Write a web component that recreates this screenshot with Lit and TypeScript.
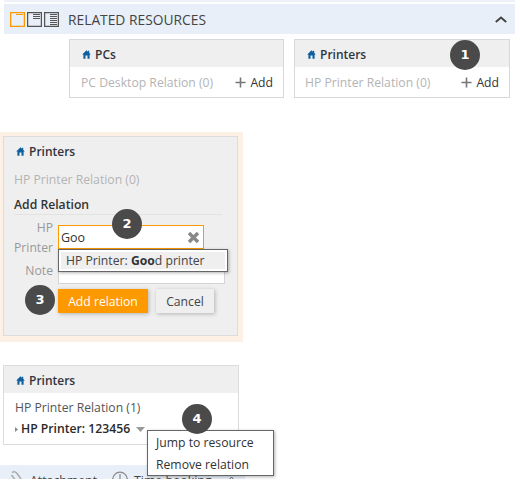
import { LitElement, html, css } from "lit";
import { customElement } from "lit/decorators.js";

const home = html`<svg class="home" width="9" height="9" viewBox="0 0 9 9"><path d="M4.500 .3 L6 1.700 V.8 H7.200 V2.800 L8.800 4.600 L7.600 4.600 L7.600 8.700 L5.500 8.700 L5.500 5.600 L3.500 5.600 L3.500 8.700 L1.400 8.700 L1.400 4.600 L.2 4.600Z" fill="#0f5f9f"/></svg>`;
const plus = html`<svg width="11" height="11" viewBox="0 0 11 11"><path d="M5.500 .5V10.500M.5 5.500H10.500" stroke="#777" stroke-width="1.600"/></svg>`;

@customElement("app-root")
export class AppRoot extends LitElement {
  static styles = css`
    :host { display: block; width: 520px; height: 489px; overflow: hidden; position: relative; background: #fff; font-family: "Open Sans", "Noto Sans", sans-serif; font-size: 12.2px; color: #333; }
    .topline { height: 2px; width: 511px; background: #eef2f8; margin: 0 0 2px 4px; }
    .bar { box-sizing: border-box; height: 30px; width: 511px; margin-left: 4px; background: #e8eff8; display: flex; align-items: center; padding: 0 8px 0 6px; }
    .views { display: flex; gap: 2px; margin-right: 9px; }
    .title { font-size: 13.800px; color: #444; flex: 1; }
    .cards { display: flex; gap: 10px; margin: 5px 0 0 69px; }
    .card { box-sizing: border-box; width: 215px; height: 59px; border: 1px solid #d8d8d8; background: #fff; }
    .card.p { width: 216px; }
    .head { box-sizing: border-box; height: 27px; background: #efefef; display: flex; align-items: center; padding: 2px 0 0 12px; gap: 4px; font-weight: 600; font-size: 12px; color: #2f3540; }
    .body { height: 30px; display: flex; align-items: center; justify-content: space-between; padding: 0 10px 0 11px; color: #b4b4b4; }
    .p .body { padding: 0 10px; }
    .add { display: flex; align-items: center; gap: 4px; color: #333; }
    .edit { margin-top: 34px; width: 243px; height: 210px; box-sizing: border-box; background: #fdf1e6; padding: 4px 0 0 3px; }
    .panel { box-sizing: border-box; width: 235px; height: 200px; border: 1px solid #dcdcdc; background: #efefef; padding: 0 10px; }
    .phead { height: 29px; display: flex; align-items: center; gap: 4px; padding-left: 2px; font-weight: 600; font-size: 12px; color: #2f3540; }
    .grey { color: #b4b4b4; margin-top: 6px; line-height: 16px; }
    .addrel { font-weight: 600; margin-top: 9px; line-height: 16px; padding-bottom: 1px; border-bottom: 1px solid #e2e2e2; width: 208px; color: #333; }
    .form { display: grid; grid-template-columns: 39px 1fr; column-gap: 5px; }
    .lbl { color: #999; text-align: right; line-height: 20px; margin-top: 3px; }
    .input { box-sizing: border-box; width: 146px; height: 24px; border: 1px solid #f90; background: #fff; margin-top: 10px; display: flex; align-items: center; justify-content: space-between; padding: 0 3px 0 2px; color: #333; font-size: 12.500px; }
    .note { box-sizing: border-box; width: 167px; height: 22px; margin-top: 4px; border: 1px solid #d4d4d4; background: #fff; }
    .menu { position: absolute; background: #fff; border: 1px solid #666; box-shadow: 1px 1px 3px rgba(0,0,0,.3); box-sizing: border-box; }
    .sug { left: 58px; top: 249px; width: 170px; height: 23px; padding: 2px; color: #444; }
    .sug div { background: #efefef; height: 17px; line-height: 17px; padding-left: 5px; }
    .sug b { font-weight: 700; color: #333; }
    .btns { display: flex; gap: 8px; margin: 5px 0 0 44px; }
    .btn { height: 24px; line-height: 25px; text-align: center; box-shadow: 1px 1px 4px rgba(0,0,0,.25); }
    .pri { width: 90px; background: #f90; color: #fff; }
    .sec { width: 58px; background: #efefef; color: #444; }
    .view { margin: 23px 0 0 3px; width: 236px; height: 80px; box-sizing: border-box; border: 1px solid #dcdcdc; }
    .rel { padding: 5px 0 0 11px; line-height: 20px; color: #555; }
    .row { display: flex; align-items: center; gap: 2px; font-weight: 600; color: #2a2a2a; margin-left: -1px; margin-top: 1px; }
    .ctx { left: 147px; top: 430px; width: 127px; height: 46px; padding: 1px 8px 0; line-height: 22px; color: #333; }
    .foot { box-sizing: border-box; margin-top: 20px; width: 245px; height: 14px; overflow: hidden; background: #e8eff8; display: flex; padding: 6px 0 0 10px; line-height: 20px; font-size: 12.300px; color: #444; }
    .foot .item { display: flex; gap: 8px; }
    .foot .item + .item { margin-left: 15px; gap: 6px; }
    .foot svg { flex: none; }
    .foot .more { margin: 6px 0 0 17px; }
    .num { position: absolute; width: 30px; height: 30px; border-radius: 50%; background: #4a4a4a; color: #fff; font: 700 13px/30px "DejaVu Sans", sans-serif; text-align: center; }
  `;

  render() {
    return html`
      <div class="topline"></div>
      <div class="bar">
        <div class="views">
          <svg width="15" height="15" viewBox="0 0 15 15"><rect x=".6" y=".6" width="13.800" height="13.800" fill="none" stroke="#f90" stroke-width="1.300"/><path d="M6 2.500H13" stroke="#f90"/></svg>
          <svg width="15" height="15" viewBox="0 0 15 15"><rect x=".6" y=".6" width="13.800" height="13.800" fill="none" stroke="#555" stroke-width="1.300"/><path d="M6 2.500H13M6 4.500H13M6 6.500H13" stroke="#555"/></svg>
          <svg width="15" height="15" viewBox="0 0 15 15"><rect x=".6" y=".6" width="13.800" height="13.800" fill="none" stroke="#555" stroke-width="1.300"/><path d="M6 2.500H13M6 4.500H13M6 6.500H13M6 8.500H13M6 10.500H13M6 12.500H13" stroke="#555"/></svg>
        </div>
        <div class="title">RELATED RESOURCES</div>
        <svg width="12" height="7" viewBox="0 0 12 7"><path d="M.8 6 L6 1.500 L11.200 6" fill="none" stroke="#444" stroke-width="2"/></svg>
      </div>
      <div class="cards">
        <div class="card"><div class="head">${home}PCs</div><div class="body"><span>PC Desktop Relation (0)</span><span class="add">${plus}Add</span></div></div>
        <div class="card p"><div class="head">${home}Printers</div><div class="body"><span>HP Printer Relation (0)</span><span class="add">${plus}Add</span></div></div>
      </div>
      <div class="edit">
        <div class="panel">
          <div class="phead">${home}Printers</div>
          <div class="grey">HP Printer Relation (0)</div>
          <div class="addrel">Add Relation</div>
          <div class="form">
            <div class="lbl">HP<br />Printer</div>
            <div class="input"><span>Goo</span><svg width="13" height="13" viewBox="0 0 13 13"><path d="M2 2L11 11M11 2L2 11" stroke="#888" stroke-width="3.400"/></svg></div>
            <div class="lbl">Note</div>
            <div class="note"></div>
          </div>
          <div class="btns"><div class="btn pri">Add relation</div><div class="btn sec">Cancel</div></div>
        </div>
      </div>
      <div class="menu sug"><div>HP Printer: <b>Goo</b>d printer</div></div>
      <div class="view">
        <div class="head">${home}Printers</div>
        <div class="rel">HP Printer Relation (1)
          <div class="row"><svg width="5" height="7" viewBox="0 0 5 7"><path d="M1 1L4 3.500L1 6Z" fill="#888"/></svg><span>HP Printer: 123456</span><svg style="margin-left:4px" width="9" height="5" viewBox="0 0 9 5"><path d="M0 0H9L4.500 5Z" fill="#999"/></svg></div>
        </div>
      </div>
      <div class="foot">
        <div class="item"><svg width="12" height="14" viewBox="0 0 12 14"><path d="M2 1.500C4 0 6 1 7 2.500L11 8" fill="none" stroke="#aaa" stroke-width="1.500"/><path d="M1.500 4L6 10" fill="none" stroke="#aaa" stroke-width="1.500"/></svg><span>Attachment</span></div>
        <div class="item"><svg width="16" height="16" viewBox="0 0 16 16"><circle cx="8" cy="8.500" r="7.300" fill="none" stroke="#888" stroke-width="1.200"/><path d="M8 3V9" stroke="#888" stroke-width="1.200"/></svg><span>Time booking</span></div>
        <svg class="more" width="5" height="4" viewBox="0 0 5 4"><path d="M0 3L2.500 0L5 3" fill="none" stroke="#666"/></svg>
      </div>
      <div class="menu ctx"><div>Jump to resource</div><div>Remove relation</div></div>
      <div class="num" style="left:450px;top:40px">1</div>
      <div class="num" style="left:112px;top:209px">2</div>
      <div class="num" style="left:25px;top:285px">3</div>
      <div class="num" style="left:182px;top:404px">4</div>
    `;
  }
}
